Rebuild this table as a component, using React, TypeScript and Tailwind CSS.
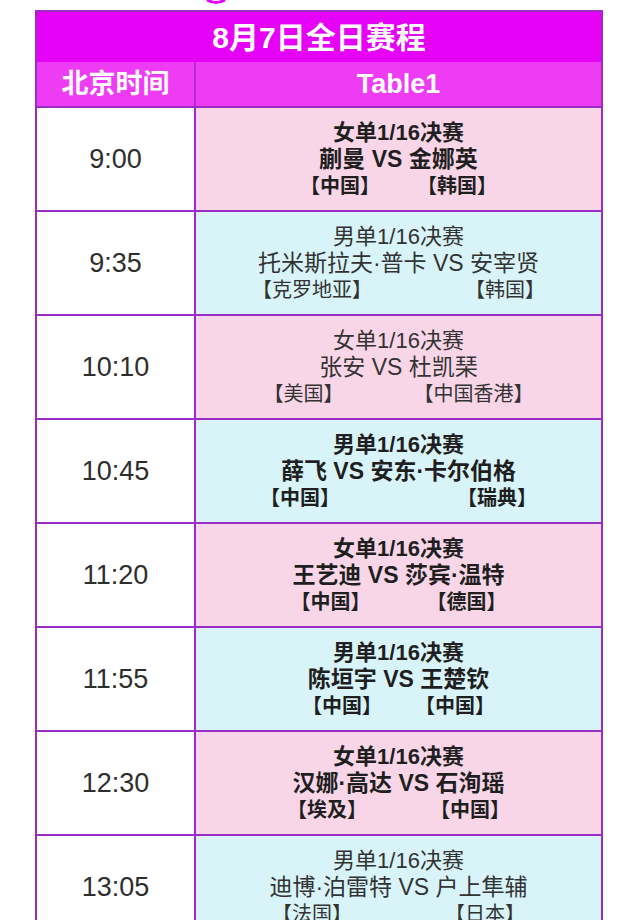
import React from "react";

type Match = {
  time: string;
  event: string;
  players: string;
  left: string;
  right: string;
  span: string;
  bold: boolean;
  pink: boolean;
};

// span = distance from the left country's start to the right country's end
const matches: Match[] = [
  { time: "9:00", event: "女单1/16决赛", players: "蒯曼 VS 金娜英", left: "【中国】", right: "【韩国】", span: "w-[197px]", bold: true, pink: true },
  { time: "9:35", event: "男单1/16决赛", players: "托米斯拉夫·普卡 VS 安宰贤", left: "【克罗地亚】", right: "【韩国】", span: "w-[293px]", bold: false, pink: false },
  { time: "10:10", event: "女单1/16决赛", players: "张安 VS 杜凯琹", left: "【美国】", right: "【中国香港】", span: "w-[270px]", bold: false, pink: true },
  { time: "10:45", event: "男单1/16决赛", players: "薛飞 VS 安东·卡尔伯格", left: "【中国】", right: "【瑞典】", span: "w-[277px]", bold: true, pink: false },
  { time: "11:20", event: "女单1/16决赛", players: "王艺迪 VS 莎宾·温特", left: "【中国】", right: "【德国】", span: "w-[216px]", bold: true, pink: true },
  { time: "11:55", event: "男单1/16决赛", players: "陈垣宇 VS 王楚钦", left: "【中国】", right: "【中国】", span: "w-[193px]", bold: true, pink: false },
  { time: "12:30", event: "女单1/16决赛", players: "汉娜·高达 VS 石洵瑶", left: "【埃及】", right: "【中国】", span: "w-[223px]", bold: true, pink: true },
  { time: "13:05", event: "男单1/16决赛", players: "迪博·泊雷特 VS 户上隼辅", left: "【法国】", right: "【日本】", span: "w-[253px]", bold: false, pink: false },
];

function MatchRow({ m }: { m: Match }) {
  return (
    <div className="flex h-[104px] shrink-0 border-b-2 border-[#9a2ec4]">
      <div className="flex w-[159px] items-center justify-center border-r-2 border-[#9a2ec4] bg-white text-[27px] text-[#2e2e2e]">
        {m.time}
      </div>
      <div
        className={`flex flex-1 flex-col items-center justify-center leading-[27px] ${
          m.pink ? "bg-[#f8d6e7]" : "bg-[#d8f4f9]"
        } ${m.bold ? "font-bold text-[#1f1f1f]" : "font-normal text-[#333]"}`}
      >
        <div className="text-[22px]">{m.event}</div>
        <div className="text-[23px]">{m.players}</div>
        <div className={`flex justify-between text-[20px] ${m.span}`}>
          <span>{m.left}</span>
          <span>{m.right}</span>
        </div>
      </div>
    </div>
  );
}

export default function App() {
  return (
    <div
      className="h-[920px] w-[640px] overflow-hidden bg-white"
      style={{ fontFamily: '"Liberation Sans", "Noto Sans CJK SC", sans-serif' }}
    >
      {/* tail of the previous graphic peeking in at the top */}
      <div className="h-[10px]">
        <svg width="640" height="10" viewBox="0 0 640 10">
          <path d="M207 0 Q216 5 225 0" stroke="#e600f5" strokeWidth="3" fill="none" />
        </svg>
      </div>

      <div className="ml-[35px] flex w-[568px] flex-col border-x-2 border-t-2 border-[#9a2ec4]">
        <div className="flex h-[50px] items-center justify-center bg-[#e502f6] text-[30px] font-bold text-white">
          8月7日全日赛程
        </div>
        <div className="flex h-[46px] border-b-2 border-[#9a2ec4] bg-[#ee3cf5] text-[27px] font-bold text-white">
          <div className="flex w-[159px] items-center justify-center border-r-2 border-[#b22ad0]">北京时间</div>
          <div className="flex flex-1 items-center justify-center">Table1</div>
        </div>
        {matches.map((m) => (
          <MatchRow key={m.time} m={m} />
        ))}
      </div>
    </div>
  );
}
